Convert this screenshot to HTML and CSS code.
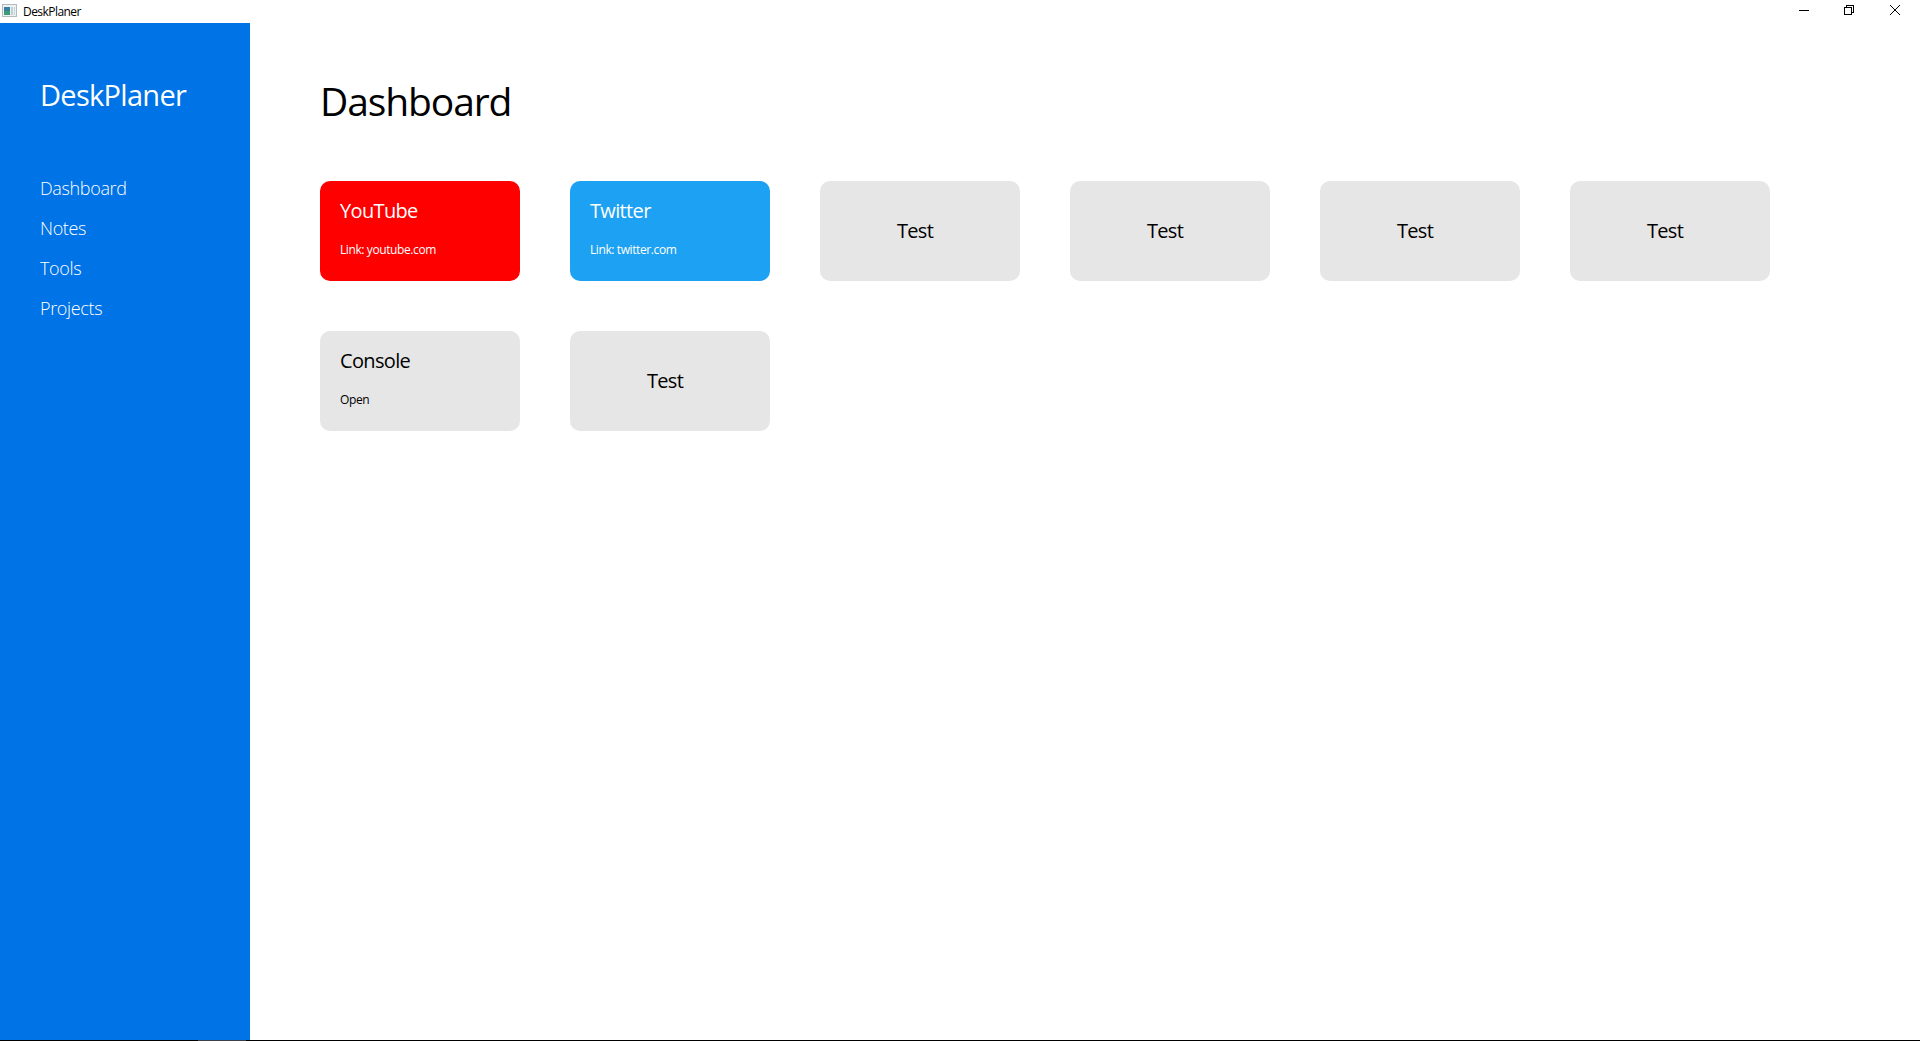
FILE: index.html
```html
<!DOCTYPE html>
<html lang="en">
<head>
<meta charset="utf-8">
<title>DeskPlaner</title>
<link rel="stylesheet" href="styles.css">
</head>
<body>
<header class="titlebar">
  <svg class="app-icon" width="15" height="13" viewBox="0 0 15 13" shape-rendering="crispEdges"><path fill="#b5babd" d="M0 0h15v13H0z"/><path fill="#eef1f3" d="M1 1h13v11H1z"/><path fill="#3b7fa0" d="M2 3h6v4H2z"/><path fill="#3f9b74" d="M2 7h6v4H2z"/><path fill="#b9d3cf" d="M9 3h2v8H9z"/><path fill="#ccd3d8" d="M12 3h1v8h-1z"/></svg>
  <span class="window-name">DeskPlaner</span>
  <div class="controls">
    <svg width="10" height="10" viewBox="0 0 10 10" shape-rendering="crispEdges"><path d="M0 5.5h10"/></svg>
    <svg width="10" height="10" viewBox="0 0 10 10" shape-rendering="crispEdges"><path d="M.5 2.5h7v7h-7zM2.5 2V.5h7v7H8"/></svg>
    <svg width="10" height="10" viewBox="0 0 10 10"><path d="M0 0l10 10M10 0L0 10"/></svg>
  </div>
</header>
<div class="window">
  <aside class="sidebar">
    <div class="logo">DeskPlaner</div>
    <nav class="nav"><a>Dashboard</a><a>Notes</a><a>Tools</a><a>Projects</a></nav>
  </aside>
  <main class="main">
    <h1 class="heading">Dashboard</h1>
    <div class="cards">
      <section class="card youtube"><h2>YouTube</h2><p>Link: youtube.com</p></section>
      <section class="card twitter"><h2>Twitter</h2><p>Link: twitter.com</p></section>
      <section class="card test">Test</section>
      <section class="card test">Test</section>
      <section class="card test">Test</section>
      <section class="card test">Test</section>
      <section class="card console"><h2>Console</h2><p>Open</p></section>
      <section class="card test">Test</section>
    </div>
  </main>
</div>
<footer class="edge"><span class="edge-light"></span></footer>
</body>
</html>
```
FILE: styles.css
```css
* { box-sizing: border-box; margin: 0; }
body { height: 100vh; display: flex; flex-direction: column; overflow: hidden; background: #fff; color: #000; font-family: "Open Sans", "Noto Sans", sans-serif; }
.titlebar { height: 23px; flex: none; display: flex; align-items: center; padding-left: 2px; }
.app-icon { margin-bottom: 2px; }
.window-name { margin-left: 6px; font-size: 12px; line-height: 22px; letter-spacing: -0.55px; }
.controls { margin-left: auto; display: flex; gap: 36px; padding-right: 20px; margin-bottom: 3px; }
.controls svg { fill: none; stroke: #000; display: block; }
.controls svg:first-child { margin-right: -1px; }
.window { flex: 1; display: flex; min-height: 0; }
.sidebar { width: 250px; flex: none; background: #0073e6; color: #fff; padding: 52px 0 0 40px; }
.logo { font-size: 29px; line-height: 40px; letter-spacing: -0.7px; }
.nav { display: flex; flex-direction: column; margin-top: 53px; font-size: 18px; letter-spacing: -0.35px; font-weight: 300; }
.nav a { line-height: 40px; }
.main { flex: 1; padding: 48px 0 0 70px; }
.heading { font-size: 39px; line-height: 60px; font-weight: 400; letter-spacing: -1.1px; }
.cards { display: grid; grid-template-columns: repeat(6, 200px); grid-auto-rows: 100px; gap: 50px; margin-top: 50px; }
.card { border-radius: 10px; background: #e6e6e6; padding: 15px 20px; }
.card h2 { font-size: 20px; line-height: 30px; font-weight: 400; letter-spacing: -0.65px; }
.card p { font-size: 12px; line-height: 20px; margin-top: 14px; letter-spacing: -0.4px; }
.youtube { background: #f00; color: #fff; }
.twitter { background: #1da1f2; color: #fff; }
.card.test { padding: 35px 0 0 77px; font-size: 20px; line-height: 30px; letter-spacing: -0.7px; }
.edge { height: 1px; flex: none; background: #000; }
.edge-light { display: block; width: 48px; height: 1px; margin-left: 198px; background: #3c4048; }
```
